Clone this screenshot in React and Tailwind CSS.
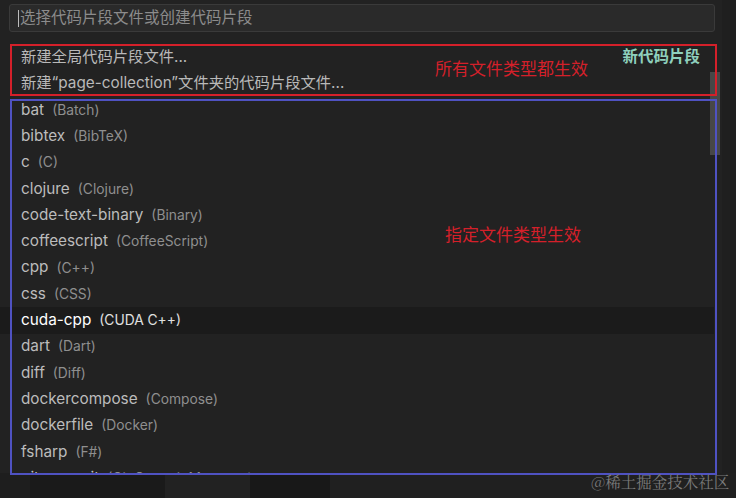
const items = [
  ["bat", "Batch"],
  ["bibtex", "BibTeX"],
  ["c", "C"],
  ["clojure", "Clojure"],
  ["code-text-binary", "Binary"],
  ["coffeescript", "CoffeeScript"],
  ["cpp", "C++"],
  ["css", "CSS"],
  ["cuda-cpp", "CUDA C++"],
  ["dart", "Dart"],
  ["diff", "Diff"],
  ["dockercompose", "Compose"],
  ["dockerfile", "Docker"],
  ["fsharp", "F#"],
  ["git-commit", "Git Commit Message"],
];

const font = { fontFamily: "Inter, 'Noto Sans CJK SC', sans-serif" };

export default function App() {
  return (
    <div
      className="relative w-[736px] h-[498px] overflow-hidden bg-[#1f1f1f] text-[15.3px]"
      style={font}
    >
      {/* quick pick panel */}
      <div className="w-[722px] h-[473px] bg-[#222222] pt-[4px] overflow-hidden">
        {/* input */}
        <div className="ml-[9px] w-[706px] h-[28px] rounded-[3px] border border-[#3a3a3a] bg-[#2a2a2a] flex items-center pl-[8px]">
          <div className="w-px h-[17px] bg-[#bdbdbd] mr-[1px]" />
          <span className="text-[#8c8c8c] text-[15.5px]">选择代码片段文件或创建代码片段</span>
        </div>

        {/* list */}
        <div className="mt-[12px] relative">
          <div className="h-[26px] flex items-center justify-between pl-[21px] pr-[22px]">
            <span className="text-[#b9b9b9]">新建全局代码片段文件...</span>
            <span className="text-[#8fd0bd] font-semibold text-[15.5px]">新代码片段</span>
          </div>
          <div className="h-[27px] flex items-center pl-[21px]">
            <span className="text-[#b9b9b9]">新建“page-collection”文件夹的代码片段文件...</span>
          </div>
          {items.map(([id, label]) => {
            const active = id === "cuda-cpp";
            return (
              <div
                key={id}
                className={`h-[26.3px] flex items-center pl-[21px] mr-[8px] ${active ? "bg-[#1b1b1b]" : ""}`}
              >
                <span className={active ? "text-white" : "text-[#bcbcbc]"}>{id}</span>
                <span className={`ml-[8px] text-[13.8px] ${active ? "text-[#e0e0e0]" : "text-[#8f8f8f]"}`}>
                  ({label})
                </span>
              </div>
            );
          })}
          {/* scrollbar */}
          <div className="absolute right-[2px] top-[28px] w-[10px] h-[83px] bg-[#474747]" />
        </div>
      </div>

      {/* backdrop below the panel */}
      <div className="flex h-[25px]">
        <div className="w-[30px] bg-[#1e1e1e]" />
        <div className="w-[135px] bg-[#1a1a1a]" />
        <div className="w-[85px] bg-[#222222]" />
        <div className="w-[80px] bg-[#181818]" />
        <div className="flex-1 bg-[#202020]" />
      </div>

      {/* annotations */}
      <div className="absolute left-[10px] top-[44px] w-[707px] h-[52px] border-2 border-[#d4202a]" />
      <div className="absolute left-[435px] top-[57px] text-[#d4202a] text-[17px]">所有文件类型都生效</div>
      <div className="absolute left-[10px] top-[99px] w-[707px] h-[376px] border-2 border-[#4f52c2]" />
      <div className="absolute left-[445px] top-[223px] text-[#d4202a] text-[17px]">指定文件类型生效</div>

      <div
        className="absolute left-[591px] top-[470px] text-[#7a7a7a] text-[15.5px]"
        style={{ fontFamily: "'Noto Serif CJK SC', 'Noto Sans CJK SC', serif" }}
      >
        @稀土掘金技术社区
      </div>
    </div>
  );
}
